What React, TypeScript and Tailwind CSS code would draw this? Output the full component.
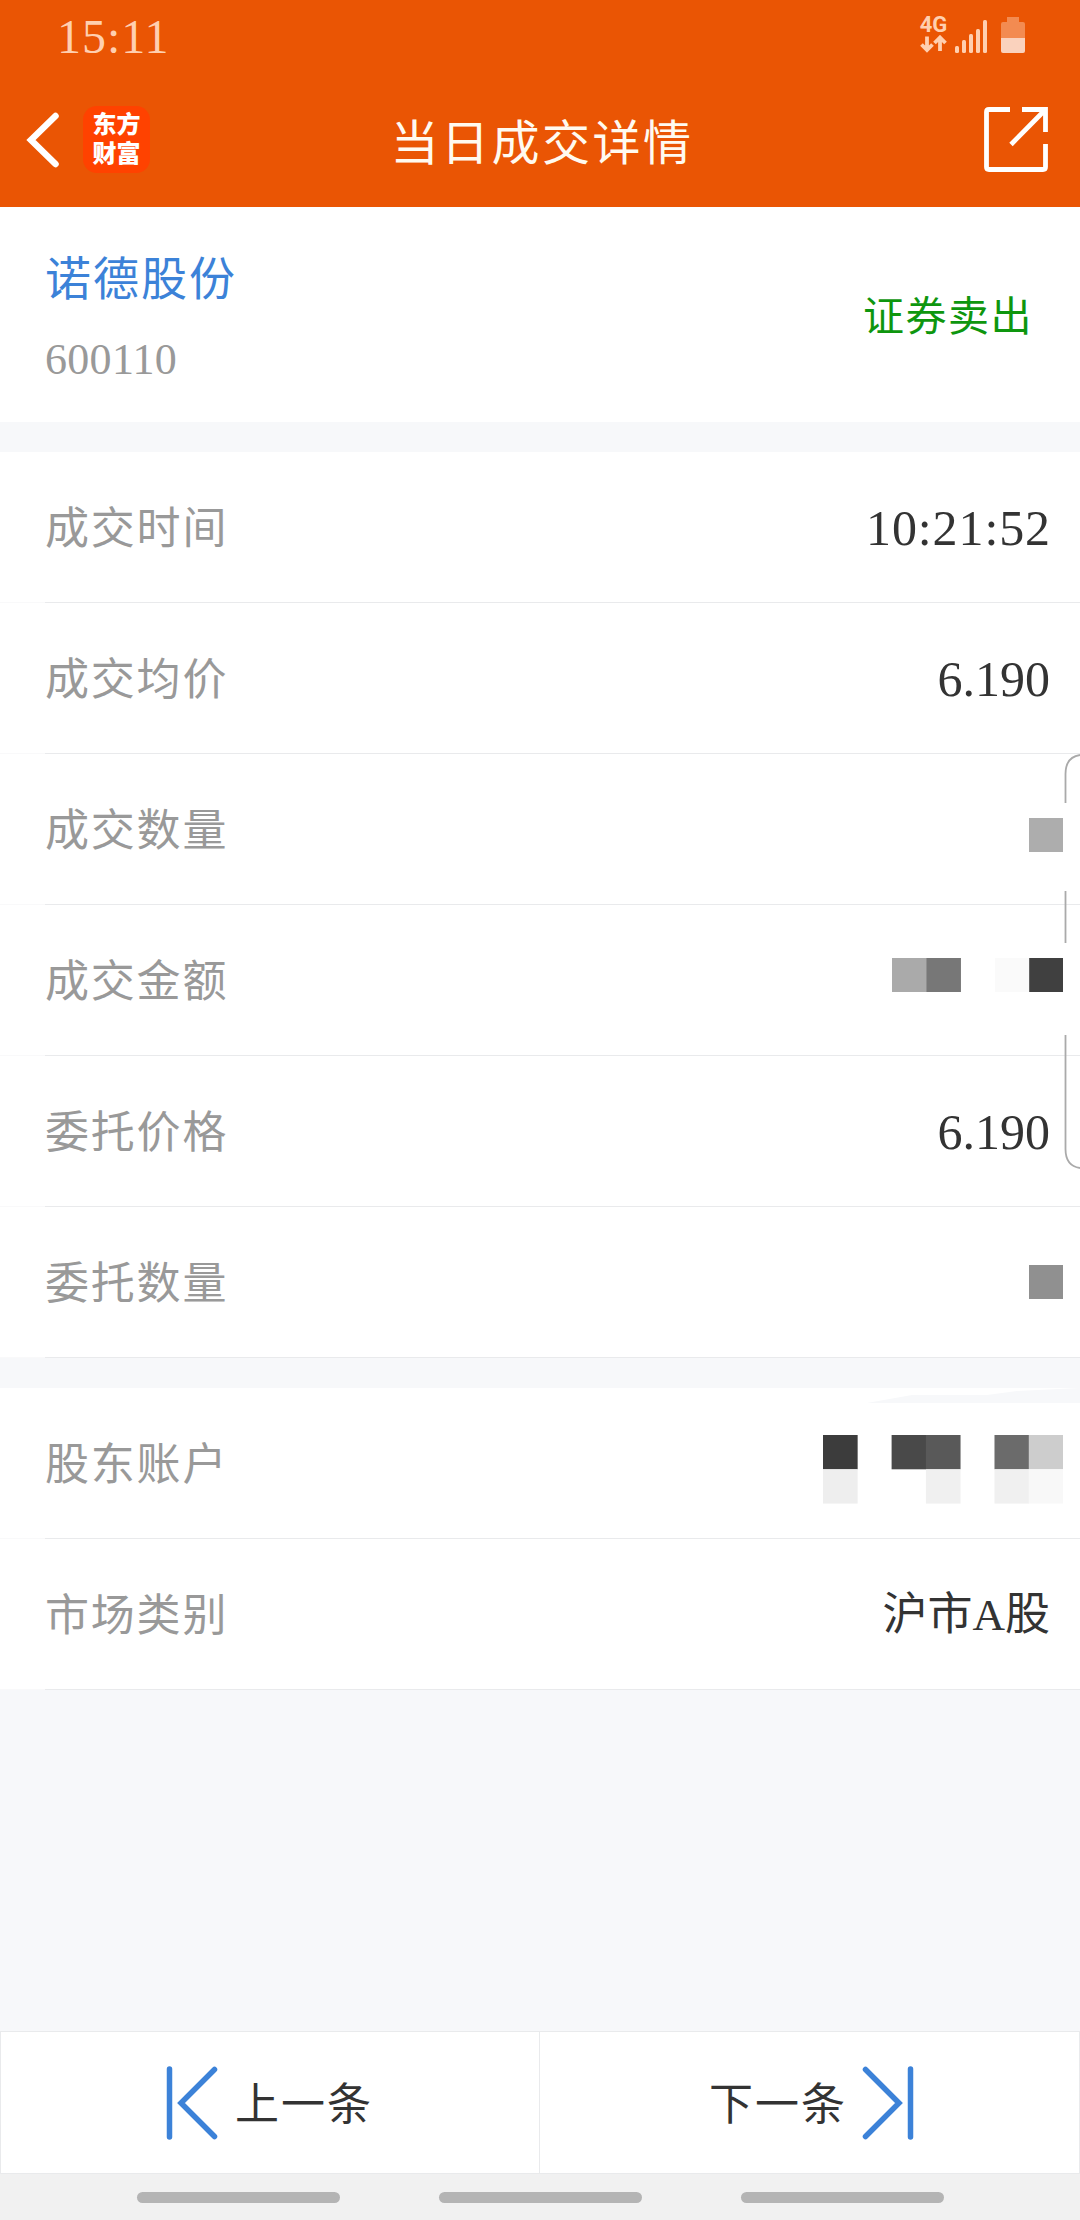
import type { ReactNode } from "react";

type Cell = { col: number; row: number; color: string };

const PIXEL = 34.3;

// Hidden values are drawn as a mosaic of gray cells
function Mosaic({ cells, cols, rows = 1 }: { cells: Cell[]; cols: number; rows?: number }) {
  return (
    <svg
      width={cols * PIXEL}
      height={rows * PIXEL}
      viewBox={`0 0 ${cols} ${rows}`}
      className="block"
    >
      {cells.map((c) => (
        <rect key={`${c.col}-${c.row}`} x={c.col} y={c.row} width={1.01} height={1} fill={c.color} />
      ))}
    </svg>
  );
}

function Row({ label, children }: { label: string; children?: ReactNode }) {
  return (
    <div className="flex h-[151px] flex-col">
      <div className="flex flex-1 items-center justify-between pl-[45px] pr-[30px]">
        <span className="pt-[6px] text-[44px] leading-none tracking-[1.8px] text-[#999]">{label}</span>
        <div className="text-[50px] leading-none text-[#333]">{children}</div>
      </div>
      <div className="flex h-px">
        <div className="w-[45px] bg-[#f9f9fa]" />
        <div className="flex-1 bg-[#e9eaec]" />
      </div>
    </div>
  );
}

function StatusBar() {
  return (
    <div className="flex h-[74px] items-center justify-between pl-[57px] pr-[55px]">
      <span className="text-[48px] leading-none tracking-[1px] text-[#ffcfb0]">15:11</span>
      <div className="flex h-[40px] items-end pb-[4px]">
        <div className="flex w-[27px] flex-col items-center text-[#ffcfb0]">
          <span className="font-[Roboto] text-[22px] leading-[20px] font-bold">4G</span>
          <svg width="27" height="18" viewBox="0 0 27 18" fill="none" stroke="currentColor" strokeWidth="3.800">
            <path d="M7 1.500V15M1.500 9.500L7 15L12.500 9.500M20 16V3M14.500 8L20 2.500L25.500 8" />
          </svg>
        </div>
        <svg width="33" height="34" viewBox="0 0 33 34" className="ml-[8px]" fill="#ffcfb0">
          <rect x="0" y="27" width="4" height="7" rx="1.500" />
          <rect x="7" y="21" width="4" height="13" rx="1.500" />
          <rect x="14" y="15" width="4" height="19" rx="1.500" />
          <rect x="21" y="10" width="4" height="24" rx="1.500" />
          <rect x="28" y="1" width="4" height="33" rx="1.500" />
        </svg>
        <svg width="24" height="36" viewBox="0 0 24 36" className="ml-[13px]">
          <path d="M6 0H18V5H22Q24 5 24 7V22H0V7Q0 5 2 5H6Z" fill="#f38b51" />
          <path d="M0 21H24V34Q24 36 22 36H2Q0 36 0 34Z" fill="#fad2bd" />
        </svg>
      </div>
    </div>
  );
}

function Header() {
  return (
    <header className="h-[207px] bg-[#ea5504]">
      <StatusBar />
      <div className="grid h-[131px] grid-cols-3 items-center pl-[26px] pr-[32px]">
        <div className="flex items-center">
          <svg width="34" height="56" viewBox="0 0 34 56" fill="none" stroke="white" strokeWidth="6.500">
            <path d="M29.500 4L5 28L29.500 52" strokeLinecap="round" />
          </svg>
          <div className="ml-[23px] flex h-[67px] w-[67px] items-center justify-center rounded-[14px] bg-[#ff4200]">
            <span className="w-[48px] text-[24px] leading-[29px] font-black text-white">东方财富</span>
          </div>
        </div>
        <h1 className="pt-[8px] pl-[10px] text-center text-[48px] leading-none whitespace-nowrap tracking-[2.500px] text-[#fffaf0]">
          当日成交详情
        </h1>
        <svg width="64" height="65" viewBox="0 0 64 65" fill="none" stroke="white" strokeWidth="4.800" className="justify-self-end">
          <path d="M26 2.500H5Q2.500 2.500 2.500 5V60Q2.500 62.500 5 62.500H59Q61.500 62.500 61.500 60V37" />
          <path d="M38 2.500H61.500V25M61 3L27 37.500" />
        </svg>
      </div>
    </header>
  );
}

function Footer() {
  return (
    <footer>
      <div className="grid h-[143px] grid-cols-2 border border-[#e9eaec] bg-white text-[44px] leading-none text-[#333]">
        <div className="flex items-center border-r border-[#e9eaec] pl-[165px]">
          <svg width="52" height="74" viewBox="0 0 52 74" fill="none" stroke="#3c82d8" strokeWidth="5.500" strokeLinecap="round">
            <path d="M3.500 3V71M48.500 3.500L15 37L48.500 70.500" />
          </svg>
          <span className="ml-[17px] pt-[6px] tracking-[2px]">上一条</span>
        </div>
        <div className="flex items-center justify-end pr-[165px]">
          <span className="mr-[15px] pt-[6px] tracking-[2px]">下一条</span>
          <svg width="52" height="74" viewBox="0 0 52 74" fill="none" stroke="#3c82d8" strokeWidth="5.500" strokeLinecap="round">
            <path d="M48.500 3V71M3.500 3.500L37 37L3.500 70.500" />
          </svg>
        </div>
      </div>
      <div className="flex h-[46px] items-center justify-center gap-[99px] bg-[#f1f1f1]">
        <div className="h-[11px] w-[203px] rounded-full bg-[#b4b4b4]" />
        <div className="h-[11px] w-[203px] rounded-full bg-[#b4b4b4]" />
        <div className="h-[11px] w-[203px] rounded-full bg-[#b4b4b4]" />
      </div>
    </footer>
  );
}

export default function App() {
  return (
    <div className="relative flex h-[2220px] w-[1080px] flex-col overflow-hidden bg-[#f7f8fa] font-['Liberation_Serif','Noto_Sans_CJK_SC',serif]">
      <Header />

      <section className="flex h-[215px] items-center justify-between bg-white pt-[3px] pl-[45px] pr-[47px]">
        <div>
          <div className="text-[46px] leading-[64px] tracking-[2px] text-[#3c82d8]">诺德股份</div>
          <div className="mt-[24px] text-[44px] leading-[48px] tracking-[0.300px] text-[#999]">600110</div>
        </div>
        <span className="pt-[2px] text-[41px] leading-none tracking-[1.500px] text-[#0e960e]">证券卖出</span>
      </section>

      <section className="mt-[30px] bg-white">
        <Row label="成交时间">
          <div className="mr-[-1px] pt-[2px] tracking-[0.900px]">10:21:52</div>
        </Row>
        <Row label="成交均价">
          <div className="pt-[2px]">6.190</div>
        </Row>
        <Row label="成交数量">
          <div className="mr-[-13px] mt-[12px]">
            <Mosaic cols={1} cells={[{ col: 0, row: 0, color: "#adadad" }]} />
          </div>
        </Row>
        <Row label="成交金额">
          <div className="mr-[-13px] mb-[10px]">
            <Mosaic
              cols={5}
              cells={[
                { col: 0, row: 0, color: "#aaaaaa" },
                { col: 1, row: 0, color: "#777777" },
                { col: 3, row: 0, color: "#fafafa" },
                { col: 4, row: 0, color: "#404040" },
              ]}
            />
          </div>
        </Row>
        <Row label="委托价格">
          <div className="pt-[2px]">6.190</div>
        </Row>
        <Row label="委托数量">
          <div className="mr-[-13px]">
            <Mosaic cols={1} cells={[{ col: 0, row: 0, color: "#909090" }]} />
          </div>
        </Row>
      </section>

      <section className="relative mt-[30px] bg-white">
        {/* brush smear left over the top edge */}
        <svg width="213" height="16" viewBox="0 0 213 16" className="absolute top-0 right-0" fill="#f7f8fa">
          <path d="M0 15L45 7L120 7L150 3L213 0V15Z" />
        </svg>
        <Row label="股东账户">
          <div className="mr-[-13px] mt-[13px]">
            <Mosaic
              cols={7}
              rows={2}
              cells={[
                { col: 0, row: 0, color: "#3c3c3c" },
                { col: 2, row: 0, color: "#494949" },
                { col: 3, row: 0, color: "#595959" },
                { col: 5, row: 0, color: "#6b6b6b" },
                { col: 6, row: 0, color: "#cdcdcd" },
                { col: 0, row: 1, color: "#eeeeee" },
                { col: 3, row: 1, color: "#f0f0f0" },
                { col: 5, row: 1, color: "#f0f0f0" },
                { col: 6, row: 1, color: "#f8f8f8" },
              ]}
            />
          </div>
        </Row>
        <Row label="市场类别">
          <div className="pt-[2px] text-[45px]">沪市A股</div>
        </Row>
      </section>

      <div className="flex-1" />
      <Footer />

      {/* edge panel handle, partly erased */}
      <svg width="16" height="420" viewBox="0 0 16 420" className="absolute top-[752px] right-0" fill="none" stroke="#aaaaaa" strokeWidth="1.800">
        <path d="M16 3Q1.500 5 1.500 22V51M1.500 139V191M1.500 283V397Q1.500 414 16 416" />
      </svg>
    </div>
  );
}
